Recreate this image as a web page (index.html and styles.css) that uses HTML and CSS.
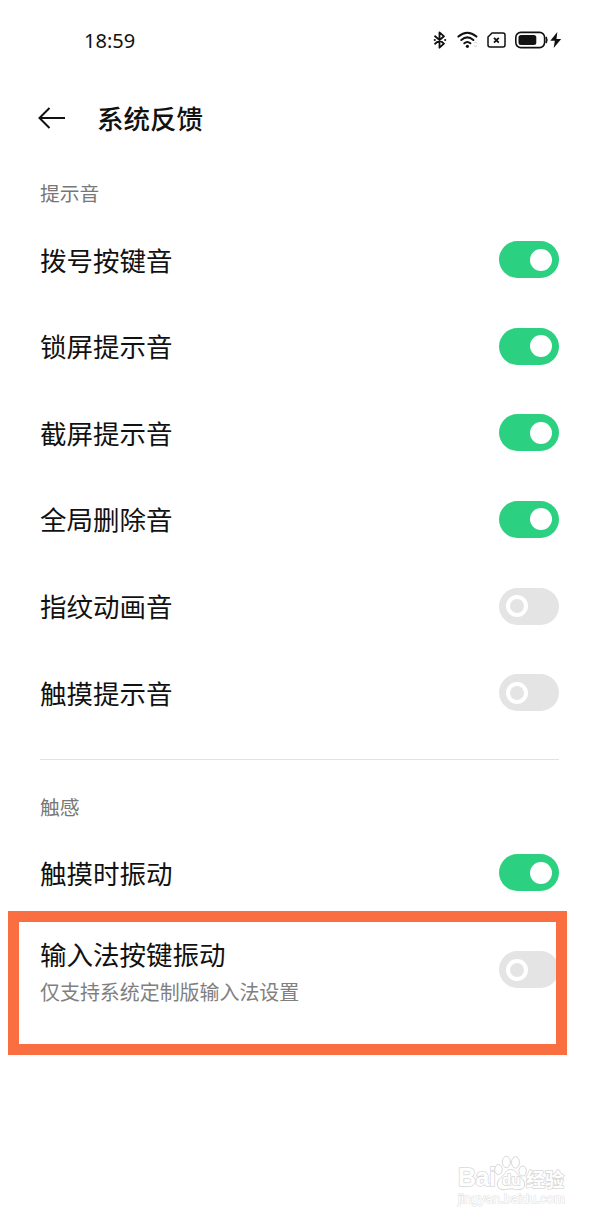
FILE: index.html
```html
<!DOCTYPE html>
<html lang="zh-CN">
<head>
    <meta charset="UTF-8">
    <meta name="viewport" content="width=device-width, initial-scale=1.0">
    <title>系统反馈</title>
    <link rel="stylesheet" href="styles.css">
</head>
<body>
    <div class="status-bar">
        <span class="time">18:59</span>
        <div class="status-icons">
            <!-- bluetooth -->
            <svg class="bluetooth" width="14" height="18" viewBox="0 0 14 18">
                <path d="M1.5 4.8 L11 12.7 L6.5 16.7 V1.3 L11 5.3 L1.5 13.2" fill="none" stroke="#111" stroke-width="1.8" stroke-linejoin="round"/>
                <circle cx="1.8" cy="9" r="1.1" fill="#111"/>
                <circle cx="12.2" cy="9" r="1.1" fill="#111"/>
            </svg>
            <!-- wifi -->
            <svg class="wifi" width="22" height="18" viewBox="0 0 22 18">
                <g fill="none" stroke="#111" stroke-width="2" stroke-linecap="round">
                    <path d="M1.4 5.6 Q10.3 -2.2 19.4 5.6"/>
                    <path d="M4.3 9 Q10.3 3.8 16.4 9"/>
                    <path d="M7.3 12.3 Q10.3 9.8 13.4 12.3"/>
                </g>
                <circle cx="10.4" cy="15.3" r="1.6" fill="#111"/>
                <path d="M17.2 12.5 L18.6 10.8 L20 12.5 M17.2 14.2 L18.6 15.9 L20 14.2" fill="none" stroke="#ccc" stroke-width="1"/>
            </svg>
            <!-- sim -->
            <svg class="sim" width="19" height="16" viewBox="0 0 19 16">
                <path d="M5 1 H16 Q18 1 18 3 V13 Q18 15 16 15 H3 Q1 15 1 13 V5 Z" fill="none" stroke="#111" stroke-width="1.5" stroke-linejoin="round"/>
                <path d="M7 5.8 L11.8 10.6 M11.8 5.8 L7 10.6" stroke="#111" stroke-width="1.8"/>
            </svg>
            <!-- battery -->
            <svg class="battery" width="48" height="18" viewBox="0 0 48 18">
                <rect x="0.8" y="1.4" width="28.8" height="15.2" rx="5" fill="none" stroke="#111" stroke-width="1.6"/>
                <rect x="3.5" y="4" width="17.8" height="10" rx="2.5" fill="#111"/>
                <path d="M31 6 Q32.6 9 31 12" fill="none" stroke="#111" stroke-width="1.7"/>
                <path d="M42.3 1 L35.3 9.8 H39.8 L38.7 17 L46.2 7.9 H41.5 Z" fill="#111"/>
            </svg>
        </div>
    </div>

    <div class="header">
        <svg class="back" width="28" height="24" viewBox="0 0 28 24">
            <path d="M27 12 H1.5 M11.5 2 L1.5 12 L11.5 22" fill="none" stroke="#111" stroke-width="2"/>
        </svg>
        <h1>系统反馈</h1>
    </div>

    <div class="section">
        <h2>提示音</h2>
        <div class="row">
            <span class="name">拨号按键音</span>
            <span class="toggle on"></span>
        </div>
        <div class="row">
            <span class="name">锁屏提示音</span>
            <span class="toggle on"></span>
        </div>
        <div class="row">
            <span class="name">截屏提示音</span>
            <span class="toggle on"></span>
        </div>
        <div class="row">
            <span class="name">全局删除音</span>
            <span class="toggle on"></span>
        </div>
        <div class="row">
            <span class="name">指纹动画音</span>
            <span class="toggle"></span>
        </div>
        <div class="row">
            <span class="name">触摸提示音</span>
            <span class="toggle"></span>
        </div>
    </div>

    <div class="section section-touch">
        <h2>触感</h2>
        <div class="row">
            <span class="name">触摸时振动</span>
            <span class="toggle on"></span>
        </div>
        <div class="row row-tall">
            <div class="text">
                <span class="name">输入法按键振动</span>
                <span class="desc">仅支持系统定制版输入法设置</span>
            </div>
            <span class="toggle"></span>
            <div class="highlight"></div>
        </div>
    </div>

    <div class="watermark">
        <div class="brand">
            <span class="bai">Bai</span>
            <span class="paw">
                <svg width="34" height="36" viewBox="0 0 34 36">
                    <g fill="#fff" stroke="#d8d8d8" stroke-width="1">
                        <ellipse cx="4.5" cy="14.5" rx="3.8" ry="5"/>
                        <ellipse cx="12.3" cy="7" rx="4" ry="5.7"/>
                        <ellipse cx="21.5" cy="7.4" rx="4" ry="5.7"/>
                        <ellipse cx="28.6" cy="16" rx="3.8" ry="5"/>
                        <path d="M16.5 14.5 C12 14.5 11.5 19 7.5 22 C1 27 2.5 34.5 9 34.7 C13 34.8 14 33.8 17 33.8 C20 33.8 21 34.8 25 34.7 C31.5 34.5 33 27 26.5 22 C22.5 19 21.5 14.5 16.5 14.5 Z"/>
                    </g>
                </svg>
                <span class="du">du</span>
            </span>
            <span class="jingyan">经验</span>
        </div>
        <div class="url">jingyan.baidu.com</div>
    </div>
</body>
</html>
```

FILE: styles.css
```css
* {
    box-sizing: border-box;
}

body {
    margin: 0;
    height: 1220px;
    position: relative;
    overflow: hidden;
    background-color: #fff;
    color: #111;
    font-family: "Noto Sans CJK SC", sans-serif;
}

.status-bar {
    display: flex;
    justify-content: space-between;
    align-items: center;
    height: 80px;
    padding: 0 36px 0 84px;
}

.time {
    font-family: "Noto Sans", sans-serif;
    font-size: 20px;
}

.status-icons {
    display: flex;
    align-items: center;
}

.wifi {
    margin-left: 10px;
}

.sim {
    margin-left: 8px;
}

.battery {
    margin-left: 9px;
}

.header {
    display: flex;
    align-items: center;
    height: 76px;
    padding-left: 38px;
}

.header h1 {
    margin: 0 0 0 31px;
    padding-bottom: 1px;
    font-size: 26.5px;
    font-weight: 500;
    line-height: 39px;
}

.section {
    padding: 0 40px;
}

.section h2 {
    margin: 0;
    padding-top: 22px;
    height: 60.4px;
    font-size: 19.8px;
    font-weight: 400;
    line-height: 30px;
    color: #777;
}

.section-touch {
    margin-top: 22.6px;
}

/* Linea divisoria */
.section-touch::before {
    content: "";
    display: block;
    height: 1px;
    background-color: #e2e2e2;
}

.section-touch h2 {
    padding-top: 32px;
    height: 70px;
}

.row {
    display: flex;
    justify-content: space-between;
    align-items: center;
    height: 86.6px;
}

.name {
    font-size: 26.5px;
    line-height: 38px;
}

.row-tall {
    position: relative;
    height: 107px;
}

.text {
    display: flex;
    flex-direction: column;
    padding-top: 6px;
}

.desc {
    font-size: 19.95px;
    line-height: 37px;
    color: #808080;
}

.toggle {
    display: flex;
    align-items: center;
    width: 60px;
    height: 37px;
    padding: 0 7px;
    border-radius: 19px;
    background-color: #e4e4e4;
}

.toggle::after {
    content: "";
    box-sizing: border-box;
    width: 22px;
    height: 22px;
    border: 4.5px solid #fff;
    border-radius: 50%;
}

.toggle.on {
    justify-content: flex-end;
    background-color: #2bd180;
}

.toggle.on::after {
    background-color: #fff;
}

/* marco sobre la ultima fila */
.highlight {
    position: absolute;
    top: -5px;
    left: -32px;
    width: 559px;
    height: 144px;
    border: 11px solid #f96f42;
}

.watermark {
    position: absolute;
    left: 458px;
    top: 1154px;
    width: 112px;
    font-family: "Liberation Sans", "Noto Sans CJK SC", sans-serif;
    color: #fff;
    paint-order: stroke fill;
    -webkit-text-stroke: 1.5px #d8d8d8;
}

.watermark svg {
    display: block;
    paint-order: normal;
}

.brand {
    display: flex;
    align-items: flex-end;
    height: 37px;
}

.bai {
    width: 37px;
    font-size: 25px;
    font-weight: bold;
    line-height: 28px;
    letter-spacing: -0.5px;
}

.paw {
    position: relative;
    flex: none;
    width: 34px;
    height: 36px;
    margin-left: -1px;
}

.du {
    position: absolute;
    left: 8px;
    top: 17px;
    font-size: 15px;
    font-weight: bold;
    line-height: 16px;
}

.jingyan {
    margin-left: -2px;
    font-family: "Noto Sans CJK SC", sans-serif;
    font-size: 19px;
    font-weight: bold;
    line-height: 25px;
    white-space: nowrap;
}

.url {
    font-size: 13.3px;
    line-height: 16px;
    -webkit-text-stroke: 1px #e0e0e0;
}
```
